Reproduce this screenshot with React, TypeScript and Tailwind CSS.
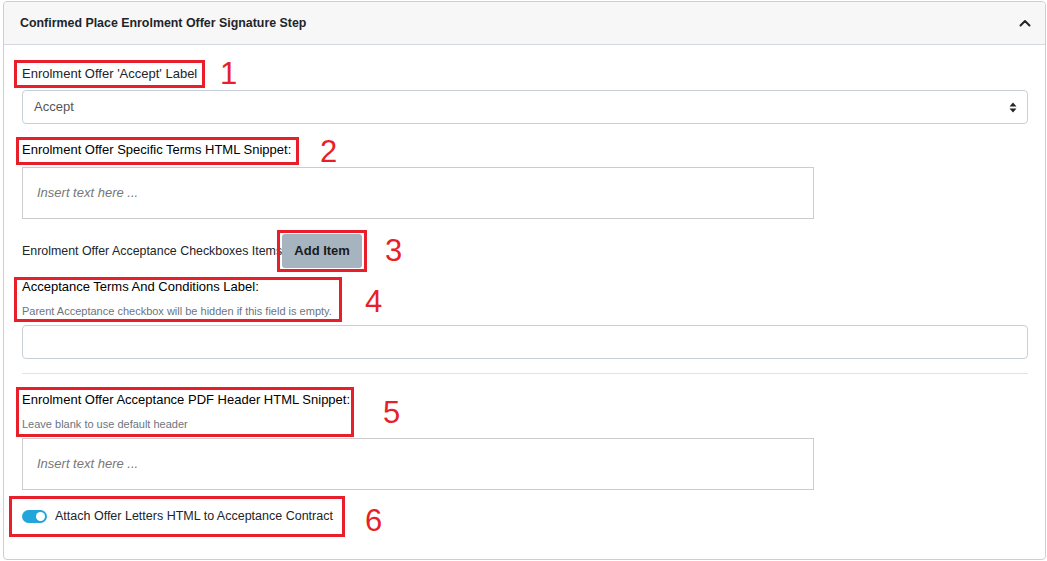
import React from 'react';

const FONT = { fontFamily: '"Liberation Sans", Arial, sans-serif' };

// red annotation frame + number, drawn over the label it marks
const Mark: React.FC<{ box: string; num: string; numPos: string; children: React.ReactNode }> = ({ box, num, numPos, children }) => (
    <div className="relative w-fit">
        {children}
        <span className={`pointer-events-none absolute border-[3px] border-[#e81f2a] ${box}`} />
        <span className={`pointer-events-none absolute text-[31px] leading-none text-[#e81f2a] ${numPos}`}>{num}</span>
    </div>
);

const Placeholder: React.FC = () => (
    <div className="h-[52px] w-[792px] border border-[#cccccc] bg-white px-[14px] pt-[15px] text-[13px] italic leading-5 text-[#777]">
        Insert text here ...
    </div>
);

export default function App() {
    return (
        <div className="min-h-[561px] bg-white pl-[3px] pr-px pt-px text-[#212529]" style={FONT}>
            <div className="w-[1043px] rounded-[4px] border border-[#c8d0d7] bg-white">
                <div className="flex h-[43px] items-center justify-between rounded-t-[4px] border-b border-[#d3d9de] bg-[#f7f7f7] pl-[16px] pr-[14px]">
                    <span className="text-[12.4px] font-bold">Confirmed Place Enrolment Offer Signature Step</span>
                    <svg width="12" height="8" viewBox="0 0 12 8" fill="none">
                        <path d="M1.5 6.5 6 2l4.5 4.5" stroke="#212529" strokeWidth="2" strokeLinecap="round" strokeLinejoin="round" />
                    </svg>
                </div>

                <div className="px-[18px] pt-[19px] pb-[33px]">
                    <Mark box="-left-[8px] -right-[8px] -top-[4px] -bottom-[4px]" num="1" numPos="left-[198px] top-[-6px]">
                        <label className="block text-[13px] leading-5">Enrolment Offer 'Accept' Label</label>
                    </Mark>
                    <div className="mt-[6px] flex h-[34px] w-[1006px] items-center justify-between rounded-[4px] border border-[#c8d0d7] pl-[11px] pr-[10px] text-[13px] text-[#555]">
                        <span>Accept</span>
                        <svg width="8" height="11" viewBox="0 0 8 11">
                            <path d="M4 0.5 7.5 4.5H0.5Z M4 10.5 0.5 6.5H7.5Z" fill="#212529" />
                        </svg>
                    </div>

                    <div className="mt-[16px]">
                        <Mark box="-left-[6px] -right-[8px] -top-[3px] -bottom-[5px]" num="2" numPos="left-[298px] top-[-4px]">
                            <label className="block text-[13px] leading-5 text-black">Enrolment Offer Specific Terms HTML Snippet:</label>
                        </Mark>
                    </div>
                    <div className="mt-[7px]">
                        <Placeholder />
                    </div>

                    <div className="mt-[15px] flex items-center">
                        <span className="text-[12.4px] leading-5">Enrolment Offer Acceptance Checkboxes Items</span>
                        <Mark box="-left-[5px] -right-[5px] -top-[4px] -bottom-[4px]" num="3" numPos="left-[103px] top-[1px]">
                            <button className="h-[34px] w-[80px] rounded-[3px] bg-[#a5b4bf] text-[13px] font-bold text-[#1a1a1a]">Add Item</button>
                        </Mark>
                    </div>

                    <div className="mt-[9px]">
                        <Mark box="-left-[8px] -right-[10px] -top-[0px] -bottom-[3px]" num="4" numPos="left-[343px] top-[9px]">
                            <label className="block text-[13px] leading-5 text-black">Acceptance Terms And Conditions Label:</label>
                            <div className="mt-[6px] text-[11px] leading-4 text-[#6c757d]">Parent Acceptance checkbox will be hidden if this field is empty.</div>
                        </Mark>
                    </div>
                    <div className="mt-[6px] h-[34px] w-[1006px] rounded-[4px] border border-[#c8d0d7]" />

                    <div className="mt-[14px] h-px w-[1006px] bg-[#e3e3e3]" />

                    <div className="mt-[16px]">
                        <Mark box="-left-[6px] -right-[4px] -top-[3px] -bottom-[5px]" num="5" numPos="left-[361px] top-[7px]">
                            <label className="block text-[13px] leading-5 text-black">Enrolment Offer Acceptance PDF Header HTML Snippet:</label>
                            <div className="mt-[6px] text-[11px] leading-4 text-[#6c757d]">Leave blank to use default header</div>
                        </Mark>
                    </div>
                    <div className="mt-[6px]">
                        <Placeholder />
                    </div>

                    <div className="mt-[16px]">
                        <Mark box="-left-[13px] -right-[12px] -top-[10px] -bottom-[11px]" num="6" numPos="left-[343px] top-[-1px]">
                            <div className="flex items-center gap-[8px]">
                                <span className="relative inline-block h-[13px] w-[25px] rounded-full bg-[#22a5db]">
                                    <span className="absolute right-[2px] top-[2px] h-[9px] w-[9px] rounded-full bg-white" />
                                </span>
                                <span className="text-[12.5px] leading-5">Attach Offer Letters HTML to Acceptance Contract</span>
                            </div>
                        </Mark>
                    </div>
                </div>
            </div>
        </div>
    );
}
